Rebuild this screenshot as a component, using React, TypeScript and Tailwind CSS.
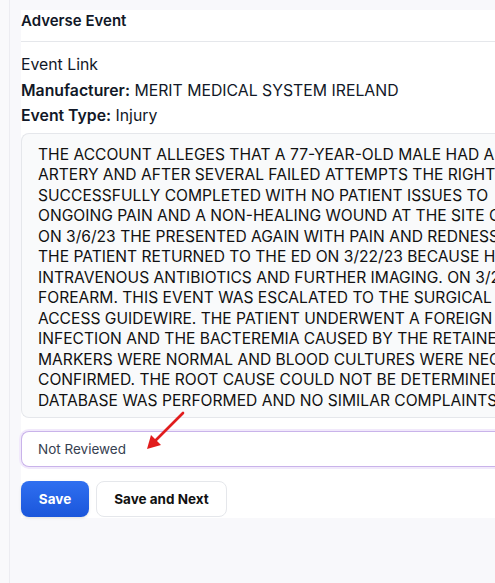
import React from "react";

const narrative = [
	"THE ACCOUNT ALLEGES THAT A 77-YEAR-OLD MALE HAD A RADIAL",
	"ARTERY AND AFTER SEVERAL FAILED ATTEMPTS THE RIGHT FEMORAL",
	"SUCCESSFULLY COMPLETED WITH NO PATIENT ISSUES TO",
	"ONGOING PAIN AND A NON-HEALING WOUND AT THE SITE OF THE",
	"ON 3/6/23 THE PRESENTED AGAIN WITH PAIN AND REDNESS AT THE",
	"THE PATIENT RETURNED TO THE ED ON 3/22/23 BECAUSE HE HAD",
	"INTRAVENOUS ANTIBIOTICS AND FURTHER IMAGING. ON 3/23/23",
	"FOREARM. THIS EVENT WAS ESCALATED TO THE SURGICAL TEAM",
	"ACCESS GUIDEWIRE. THE PATIENT UNDERWENT A FOREIGN BODY",
	"INFECTION AND THE BACTEREMIA CAUSED BY THE RETAINED",
	"MARKERS WERE NORMAL AND BLOOD CULTURES WERE NEGATIVE.",
	"CONFIRMED. THE ROOT CAUSE COULD NOT BE DETERMINED. A",
	"DATABASE WAS PERFORMED AND NO SIMILAR COMPLAINTS WERE",
];

function Arrow() {
	return (
		<svg className="absolute left-[140px] top-[409px]" width="50" height="46" viewBox="0 0 50 46">
			<line x1="43" y1="4" x2="13" y2="34" stroke="#e11d1d" strokeWidth="2.6" strokeLinecap="round" />
			<polygon points="7,40 11,26 21,36" fill="#e11d1d" />
		</svg>
	);
}

export default function App() {
	return (
		<div
			className="relative flex min-h-[583px] w-[495px] overflow-hidden bg-[#f8f8fb] text-[#111827]"
			style={{ fontFamily: "Inter, 'Noto Sans', sans-serif" }}
		>
			<div className="w-[10px] shrink-0 border-r border-[#ececf1] bg-[#f9f9fb]" />
			<div className="min-w-0 flex-1 pl-[11px] pt-[10px]">
				<div className="bg-white pb-[1px]">
					<div className="h-[32px] border-b border-[#e5e7eb] pt-[1px] text-[15px] font-semibold leading-[20px]">
						Adverse Event
					</div>
					<div className="flex flex-col pt-[10px] text-[15.8px] leading-[25.5px]">
						<span>Event Link</span>
						<span>
							<b className="font-semibold">Manufacturer:</b> MERIT MEDICAL SYSTEM IRELAND
						</span>
						<span>
							<b className="font-semibold">Event Type:</b> Injury
						</span>
					</div>
					<div className="mt-[4px] overflow-hidden rounded-l-lg border border-r-0 border-[#e5e7eb] bg-[#f9fafb] pb-[6px] pl-[16px] pt-[11px] text-[15.6px] leading-[20.5px] text-[#111]">
						{narrative.map((line) => (
							<div key={line} className="whitespace-nowrap">
								{line}
							</div>
						))}
					</div>
					<div className="mt-[13px] flex h-[36px] items-center rounded-l-lg border border-r-0 border-[#c9b3ea] bg-white pl-[16px] text-[13.5px] text-[#374151] shadow-[0_0_0_2px_#f1e9fb]">
						Not Reviewed
					</div>
					<div className="mt-[14px] flex gap-[7px]">
						<button className="h-[36px] w-[68px] rounded-lg bg-gradient-to-b from-[#2f6ff0] to-[#1a56db] text-[13.5px] font-bold text-white shadow-sm">
							Save
						</button>
						<button className="h-[36px] w-[131px] rounded-lg border border-[#e5e7eb] bg-white text-[13.5px] font-bold text-[#111]">
							Save and Next
						</button>
					</div>
				</div>
			</div>
			<Arrow />
		</div>
	);
}
